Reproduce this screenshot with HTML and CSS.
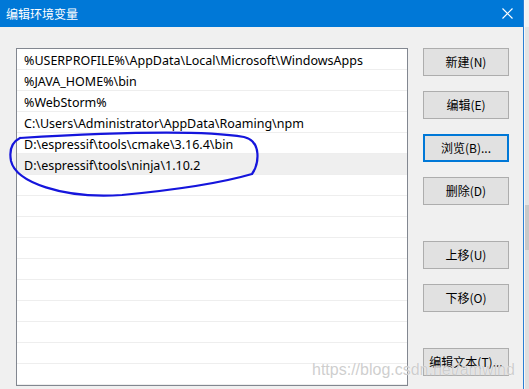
FILE: index.html
```html
<!doctype html>
<html lang="zh-CN">
<head>
  <meta charset="UTF-8" />
  <meta name="viewport" content="width=device-width, initial-scale=1.0" />
  <title>编辑环境变量</title>
  <link rel="stylesheet" href="styles.css">
</head>
<body>
  <div class="screen">
    <div class="dialog">
      <div class="titlebar">
        <span class="title">编辑环境变量</span>
        <svg class="close-icon" width="11" height="11" viewBox="0 0 11 11">
          <path d="M0.5 0.5 L10.5 10.5 M10.5 0.5 L0.5 10.5" stroke="#fff" stroke-width="1.2" fill="none" />
        </svg>
      </div>

      <div class="content">
        <ul class="path-list">
          <li>%USERPROFILE%\AppData\Local\Microsoft\WindowsApps</li>
          <li>%JAVA_HOME%\bin</li>
          <li>%WebStorm%</li>
          <li>C:\Users\Administrator\AppData\Roaming\npm</li>
          <li>D:\espressif\tools\cmake\3.16.4\bin</li>
          <li class="selected">D:\espressif\tools\ninja\1.10.2</li>
          <li></li>
          <li></li>
          <li></li>
          <li></li>
          <li></li>
          <li></li>
          <li></li>
          <li></li>
          <li></li>
          <li></li>
        </ul>

        <div class="actions">
          <button class="btn">新建(N)</button>
          <button class="btn">编辑(E)</button>
          <button class="btn focused">浏览(B)...</button>
          <button class="btn">删除(D)</button>
          <button class="btn spaced">上移(U)</button>
          <button class="btn">下移(O)</button>
          <button class="btn spaced">编辑文本(T)...</button>
        </div>
      </div>

      <!-- hand drawn marker round the two new entries -->
      <svg class="marker" width="270" height="70" viewBox="0 130 270 70">
        <path d="M20 138 C70 135, 190 128, 244 137 C262 141, 259 164, 252 174 C228 181, 185 189, 122 195 C62 199, 16 182, 11 161 C9 150, 12 142, 20 138"
              stroke="#1515dc" stroke-width="2.2" fill="none" stroke-linecap="round" />
      </svg>

      <div class="watermark">https://blog.csdn.net/amwind</div>
    </div>
    <div class="behind"></div>
  </div>
</body>
</html>
```

FILE: styles.css
```css
* {
  box-sizing: border-box;
  margin: 0;
  padding: 0;
}

body {
  font-family: 'Noto Sans', 'Noto Sans CJK SC', sans-serif;
  font-size: 12px;
  color: #000;
  background: #f0f0f0;
  width: 529px;
  height: 389px;
  overflow: hidden;
}

.screen {
  display: flex;
  height: 389px;
}

.dialog {
  position: relative;
  width: 524px;
  height: 389px;
  background: #f0f0f0;
  border-right: 1px solid #2b7fd4;
  overflow: hidden;
}

.behind {
  flex: 1;
  background: linear-gradient(#f2f2f2 0, #f2f2f2 27px, #e3e3e3 27px, #e3e3e3 205px, #c8c8c8 205px, #c8c8c8 250px, #dedede 250px);
  border-left: 1px solid #f7f7f7;
}

.titlebar {
  height: 27px;
  background: #0078d7;
  color: #fff;
  display: flex;
  align-items: center;
  justify-content: space-between;
  padding: 0 10px 1px 6px;
}

.title {
  font-family: 'Noto Sans CJK SC', sans-serif;
  font-size: 12px;
}

.close-icon {
  display: block;
}

.content {
  display: flex;
  align-items: flex-start;
  padding: 21px 0 0 16px;
}

/* ===== list of paths ===== */
.path-list {
  list-style: none;
  width: 392px;
  background: #fff;
  border: 1px solid #828790;
}

.path-list li {
  height: 21px;
  line-height: 21px;
  padding: 1px 0 0 7px;
  font-size: 12.5px;
  border-bottom: 1px solid #eeeeee;
  white-space: nowrap;
}

.path-list li.selected {
  background: #efefef;
}

/* ===== buttons ===== */
.actions {
  display: flex;
  flex-direction: column;
  margin-left: 15px;
}

.btn {
  display: block;
  width: 86px;
  height: 28px;
  margin-top: 15px;
  background: #e1e1e1;
  border: 1px solid #adadad;
  font-family: 'Noto Sans CJK SC', sans-serif;
  font-size: 12px;
  line-height: 16px;
  color: #000;
}

.btn:first-child {
  margin-top: 0;
}

.btn.focused {
  border: 2px solid #0078d7;
}

.btn.spaced {
  margin-top: 36px;
}

.marker {
  position: absolute;
  left: 0;
  top: 130px;
}

.watermark {
  position: absolute;
  left: 312px;
  top: 361px;
  font-family: 'Liberation Sans', Arial, sans-serif;
  font-size: 16px;
  color: rgba(190, 190, 190, 0.75);
  text-shadow: 0 0 1px #fff;
}
```
